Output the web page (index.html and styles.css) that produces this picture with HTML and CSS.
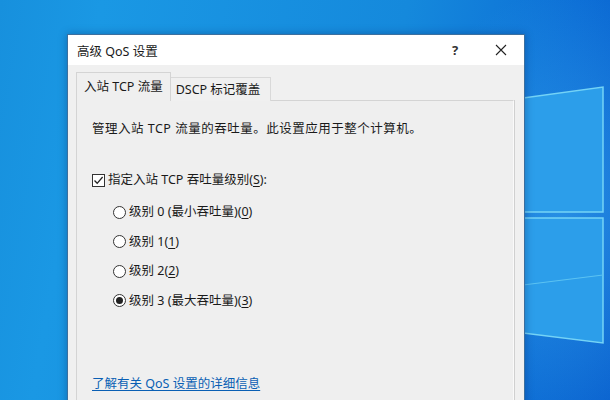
FILE: index.html
```html
<!DOCTYPE html>
<html lang="zh-CN">
<head>
    <meta charset="UTF-8">
    <title>高级 QoS 设置</title>
    <link rel="stylesheet" href="styles.css">
</head>
<body>
    <div class="desktop">
        <svg class="logo" width="90" height="280" viewBox="0 0 90 280">
            <polygon points="0,20 80,9 80,134 0,134" fill="#2c9eea" stroke="#74d3f6" stroke-width="1.5"/>
            <polygon points="0,140 80,140 80,265 0,255" fill="#2c9eea" stroke="#74d3f6" stroke-width="1.5"/>
            <line x1="0" y1="207" x2="80" y2="197" stroke="#5cc3f2" stroke-width="1"/>
        </svg>
        <div class="dialog">
            <div class="titlebar">
                <span class="title">高级 QoS 设置</span>
                <span class="tb-btn">?</span>
                <span class="tb-btn">
                    <svg width="12" height="12" viewBox="0 0 12 12"><path d="M1 1L11 11M11 1L1 11" stroke="#222" stroke-width="1.1"/></svg>
                </span>
            </div>
            <div class="body">
                <div class="tabs">
                    <div class="tab active">入站 TCP 流量</div>
                    <div class="tab">DSCP 标记覆盖</div>
                </div>
                <div class="panel">
                    <p class="desc">管理入站 TCP 流量的吞吐量。此设置应用于整个计算机。</p>
                    <div class="check-row">
                        <span class="checkbox">
                            <svg width="11" height="11" viewBox="0 0 11 11"><path d="M1.5 5.5L4.2 8.3L9.6 2" fill="none" stroke="#222" stroke-width="1.3"/></svg>
                        </span>
                        <span>指定入站 TCP 吞吐量级别(<u>S</u>):</span>
                    </div>
                    <div class="radios">
                        <div class="radio-row"><span class="radio"></span><span>级别 0 (最小吞吐量)(<u>0</u>)</span></div>
                        <div class="radio-row"><span class="radio"></span><span>级别 1(<u>1</u>)</span></div>
                        <div class="radio-row"><span class="radio"></span><span>级别 2(<u>2</u>)</span></div>
                        <div class="radio-row"><span class="radio on"></span><span>级别 3 (最大吞吐量)(<u>3</u>)</span></div>
                    </div>
                    <a class="more" href="#">了解有关 QoS 设置的详细信息</a>
                </div>
            </div>
        </div>
    </div>
</body>
</html>
```

FILE: styles.css
```css
html, body {
    margin: 0;
    height: 100%;
    overflow: hidden;
}
body {
    font-family: "Noto Sans", "Noto Sans CJK SC", sans-serif;
    font-size: 12.5px;
    color: #1a1a1a;
}
.desktop {
    position: relative;
    height: 400px;
    padding: 34px 0 0 67px;
    box-sizing: border-box;
    background:
        radial-gradient(ellipse 160px 220px at 560px 210px, rgba(60, 170, 240, 0.55), rgba(60, 170, 240, 0) 100%),
        linear-gradient(100deg, #1790dd 0%, #1a98e4 15%, #1589dc 60%, #0d6fd6 85%, #0a62cf 100%);
}
.logo {
    position: absolute;
    left: 523px;
    top: 78px;
}
.dialog {
    position: relative;
    width: 456px;
    height: 400px;
    background: #f0f0f0;
    border: 1px solid #3c6f9e;
    border-bottom: none;
    box-shadow: 0 0 8px rgba(0, 30, 80, 0.35);
}
.titlebar {
    display: flex;
    align-items: center;
    height: 30px;
    background: #ffffff;
    padding-left: 9px;
}
.title {
    flex: 1;
    font-size: 12.5px;
}
.tb-btn {
    width: 46px;
    display: flex;
    justify-content: center;
    align-items: center;
    font-size: 13px;
    font-weight: bold;
    color: #333;
}
.body {
    padding: 6px 10px 0 8px;
}
.tabs {
    display: flex;
    align-items: flex-end;
    height: 29px;
}
.tab {
    padding: 0 7px;
    height: 23px;
    line-height: 23px;
    border: 1px solid #d9d9d9;
    border-bottom: none;
    background: #f0f0f0;
    margin-bottom: -1px;
}
.tab.active {
    height: 28px;
    line-height: 28px;
    background: #efefef;
    border-color: #d4d4d4;
    position: relative;
    z-index: 1;
}
.tab + .tab {
    border-left: none;
    padding: 0 10px 0 5px;
}
.panel {
    border: 1px solid #d4d4d4;
    border-right-color: #fafafa;
    box-shadow: 1px 0 0 #d0d0d0;
    background: #efefef;
    height: 320px;
    padding: 19px 15px 0 15px;
}
.desc {
    margin: 0;
    line-height: 18px;
    letter-spacing: 0.5px;
}
.check-row {
    display: flex;
    align-items: center;
    margin-top: 33px;
    line-height: 18px;
}
.checkbox {
    width: 11px;
    height: 11px;
    border: 1px solid #333;
    background: #fff;
    margin-right: 3px;
    display: flex;
}
.radios {
    margin-top: 14px;
    padding-left: 21px;
}
.radio-row {
    display: flex;
    align-items: center;
    line-height: 18px;
    margin-bottom: 11.5px;
}
.radio {
    width: 11px;
    height: 11px;
    border: 1px solid #333;
    border-radius: 50%;
    background: #fff;
    margin-right: 3px;
    display: flex;
    justify-content: center;
    align-items: center;
}
.radio.on::after {
    content: "";
    width: 7px;
    height: 7px;
    border-radius: 50%;
    background: #222;
}
u {
    text-underline-offset: 2px;
}
.more {
    display: inline-block;
    margin-top: 54px;
    line-height: 18px;
    color: #0a5fb4;
    text-decoration: underline;
    text-underline-offset: 2px;
}
```
